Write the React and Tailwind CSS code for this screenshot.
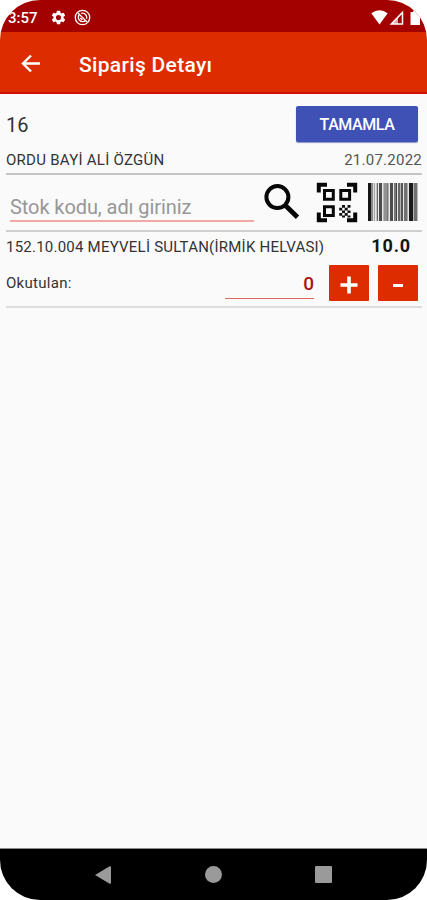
import React from "react";

// [x, width, colour] of each bar, in a 50 unit wide field
const bars = [
  [0, 3, "#161616"], [3, 2, "#8a8a8a"], [5, 1, "#dedede"], [6, 1, "#a5a5a5"], [8, 1, "#c4c4c4"],
  [9, 1, "#666"], [11, 3, "#4c4c4c"], [15, 1, "#b5b5b5"], [16, 3, "#929292"], [19, 1, "#777"],
  [20, 1, "#b5b5b5"], [22, 3, "#4c4c4c"], [26, 2, "#777"], [28, 1, "#444"], [30, 2, "#666"],
  [32, 1, "#b0b0b0"], [33, 2, "#555"], [36, 3, "#707070"], [39, 1, "#aaa"], [41, 4, "#1b1b1b"],
  [45, 1, "#b5b5b5"], [46, 3, "#707070"], [49, 1, "#bbb"],
];

function StatusBar() {
  return (
    <div className="flex h-8 shrink-0 items-start bg-[#a30000] pt-[9px] text-white">
      <span className="ml-[8px] w-[32px] whitespace-nowrap text-[15px] font-medium leading-[19px]">3:57</span>
      <svg className="ml-[10px] h-[17px] w-[17px]" viewBox="0 0 24 24" fill="currentColor">
        <path d="M19.14 12.94c.04-.3.06-.61.06-.94s-.02-.64-.07-.94l2.03-1.58a.49.49 0 0 0 .12-.61l-1.92-3.32a.49.49 0 0 0-.59-.22l-2.39.96a7 7 0 0 0-1.62-.94l-.36-2.54a.48.48 0 0 0-.48-.41h-3.84a.48.48 0 0 0-.47.41l-.36 2.54c-.59.24-1.13.57-1.62.94l-2.39-.96a.49.49 0 0 0-.59.22L2.74 8.87a.48.48 0 0 0 .12.61l2.03 1.58a6 6 0 0 0 0 1.88l-2.03 1.58a.49.49 0 0 0-.12.61l1.92 3.32c.12.22.37.29.59.22l2.39-.96c.5.38 1.03.7 1.62.94l.36 2.54c.05.24.24.41.48.41h3.84c.24 0 .44-.17.47-.41l.36-2.54a7 7 0 0 0 1.62-.94l2.39.96c.22.08.47 0 .59-.22l1.92-3.32a.49.49 0 0 0-.12-.61zM12 15.6a3.6 3.6 0 1 1 0-7.2 3.6 3.6 0 0 1 0 7.2" />
      </svg>
      <svg className="ml-[7px] h-[17px] w-[17px]" viewBox="0 0 17 17" fill="none" stroke="currentColor">
        <circle cx="8.5" cy="8.5" r="7.2" strokeWidth="1.3" />
        <path d="M5.6 5.3A4.3 4.3 0 1 0 11.7 11.4M7.2 4.4a4.3 4.3 0 0 1 5.4 5.4" strokeWidth="1.4" />
        <path d="M4 4l9 9M6.3 8.9l2 2" strokeWidth="1.4" />
      </svg>
      <svg className="ml-auto mt-px h-[16px] w-[17px]" viewBox="0 0 17 16" fill="currentColor">
        <path d="M.3 3.3Q8.5-2.6 16.7 3.3L8.5 14.5z" />
      </svg>
      <svg className="ml-[1px] mt-px h-[16px] w-[15px]" viewBox="0 0 15 16">
        <path d="M2.3 14L13.5 2.4V14z" fill="none" stroke="currentColor" strokeWidth="1.5" />
        <path d="M2 14l7-7.3V14z" fill="currentColor" fillOpacity=".65" />
      </svg>
      <svg className="ml-[6px] mr-[7px] mt-px h-[16px] w-[10px]" viewBox="0 0 10 16" fill="currentColor">
        <path d="M.5 2h2.7V.5h4V2H10v13H.5z" />
      </svg>
    </div>
  );
}

function QrScan() {
  return (
    <svg className="ml-4 h-[41px] w-[42px]" viewBox="0 0 42 41">
      <g fill="none" stroke="#080808">
        <path d="M2.8 10.5V2.8H11M31 2.8h8.2v7.7M2.8 30.5v7.7H11M31 38.2h8.2v-7.7" strokeWidth="4" />
        <path d="M8.5 8.5h8.8v8.8H8.5zM24.8 8.5h8.8v8.8h-8.8zM8.5 24.7h8.8v8.8H8.5z" strokeWidth="3" />
      </g>
      <path
        d="M26 23h3v2.7h-3zM31.5 23h3v2.7h-3zM23.2 25.7h3v2.7h-3zM28.7 25.7h3v2.7h-3zM26 28.4h3v2.7h-3zM31.5 28.4h3v2.7h-3zM23.2 31.1h3v2.7h-3zM28.7 31.1h3v2.7h-3zM26 33.4h3v2h-3zM31.5 33.4h3v2h-3z"
        fill="#111"
      />
    </svg>
  );
}

export default function App() {
  return (
    <div className="h-[900px] w-[427px] overflow-hidden bg-white">
      <div className="flex h-full flex-col overflow-hidden rounded-[40px] bg-[#fafafa] font-[Roboto,sans-serif] text-[#333]">
        <StatusBar />
        <header className="flex h-[62px] shrink-0 items-center border-b-2 border-[#d30d00] bg-[#dd2c00] pt-1 text-white">
          <svg className="-mt-[2px] ml-[21px] h-[19px] w-5" viewBox="0 0 20 19" fill="none" stroke="currentColor" strokeWidth="2.4">
            <path d="M19 9.5H2.5M10 1.5l-8 8 8 8" />
          </svg>
          <h1 className="ml-[38px] mt-[2px] whitespace-nowrap text-[21px] font-medium leading-7 tracking-[0.32px]">Sipariş Detayı</h1>
        </header>

        <main className="flex flex-1 flex-col pl-1.5 pr-[5px]">
          <div className="flex h-[53px] items-end justify-between pr-1">
            <span className="pb-[6px] text-[20px] leading-8 tracking-[0.1px]">16</span>
            <button className="mb-[5px] h-9 w-[122px] rounded-[2px] bg-[#3f51b5] pt-[2px] text-[16px] font-medium tracking-[-0.4px] text-white shadow-[0_1px_1px_#8d94bd]">TAMAMLA</button>
          </div>
          <div className="flex h-[28px] items-center justify-between border-b-2 border-[#c5c5c5] text-[15px]">
            <span className="whitespace-nowrap tracking-[0.27px]">ORDU BAYİ ALİ ÖZGÜN</span>
            <span className="whitespace-nowrap tracking-[0.25px] text-[#555]">21.07.2022</span>
          </div>

          <div className="flex h-[57px] items-center border-b-2 border-[#cfcfcf]">
            <div className="ml-1 flex h-[39px] w-[244px] items-end whitespace-nowrap border-b-2 border-[#f0a8a4] text-[20px] leading-[25px] tracking-[-0.08px] text-[#979797]">Stok kodu, adı giriniz</div>
            <svg className="-mt-[2px] ml-[10px] h-9 w-9" viewBox="0 0 36 36" fill="none" stroke="#060606">
              <circle cx="13.4" cy="13.1" r="11" strokeWidth="4" />
              <path d="M21.5 21.5L33.5 33.3" strokeWidth="4.8" />
            </svg>
            <QrScan />
            <svg className="-mt-px ml-[10px] h-[38px] w-[50px]" viewBox="0 0 50 38">
              <rect width="50" height="38" fill="#e9e9e9" />
              {bars.map(([x, w, fill]) => (
                <rect key={x} x={x} y="0" width={w} height="38" fill={fill} />
              ))}
            </svg>
          </div>

          <section className="flex h-[76px] flex-col border-b-2 border-[#dedede]">
            <div className="flex h-[31px] items-center justify-between pr-[11px]">
              <span className="whitespace-nowrap text-[15px] tracking-[0.23px]">152.10.004 MEYVELİ SULTAN(İRMİK HELVASI)</span>
              <span className="-mt-[4px] text-[18px] font-bold tracking-[0.9px] text-[#151515]">10.0</span>
            </div>
            <div className="flex flex-1 items-start pr-1 pt-[2px]">
              <span className="mt-[7px] text-[15px] leading-[22px] tracking-[0.3px]">Okutulan:</span>
              <div className="ml-auto mr-[15px] h-[34px] w-[89px] border-b border-[#dd6963] text-right text-[19px] font-medium leading-[37px] text-[#a81414]">0</div>
              <button aria-label="+" className="mr-[9px] flex h-9 w-10 items-center justify-center rounded-[1px] bg-[#dd2c00]">
                <svg className="mt-[4px] h-[18px] w-[18px]" viewBox="0 0 18 18"><path d="M9 .5v17M.5 9h17" stroke="#fff" strokeWidth="3.6" /></svg>
              </button>
              <button aria-label="-" className="flex h-9 w-10 items-center justify-center rounded-[1px] bg-[#dd2c00]">
                <svg className="mt-[5px] h-[3px] w-[10px]" viewBox="0 0 10 3"><path d="M0 1.5h10" stroke="#fff" strokeWidth="3" /></svg>
              </button>
            </div>
          </section>
        </main>

        <nav className="flex h-[52px] shrink-0 items-center border-t border-[#8c8c8c] bg-black text-[#9a9a9a]">
          <svg className="ml-[95px] h-[18px] w-4" viewBox="0 0 16 18" fill="currentColor"><path d="M0 9L14.7.3Q16-.2 16 1.2v15.6q0 1.4-1.3.9z" /></svg>
          <span className="ml-[94px] h-[17px] w-[17px] rounded-full bg-[#9a9a9a]" />
          <span className="ml-[93px] h-[17px] w-[17px] rounded-[1px] bg-[#9a9a9a]" />
        </nav>
      </div>
    </div>
  );
}
